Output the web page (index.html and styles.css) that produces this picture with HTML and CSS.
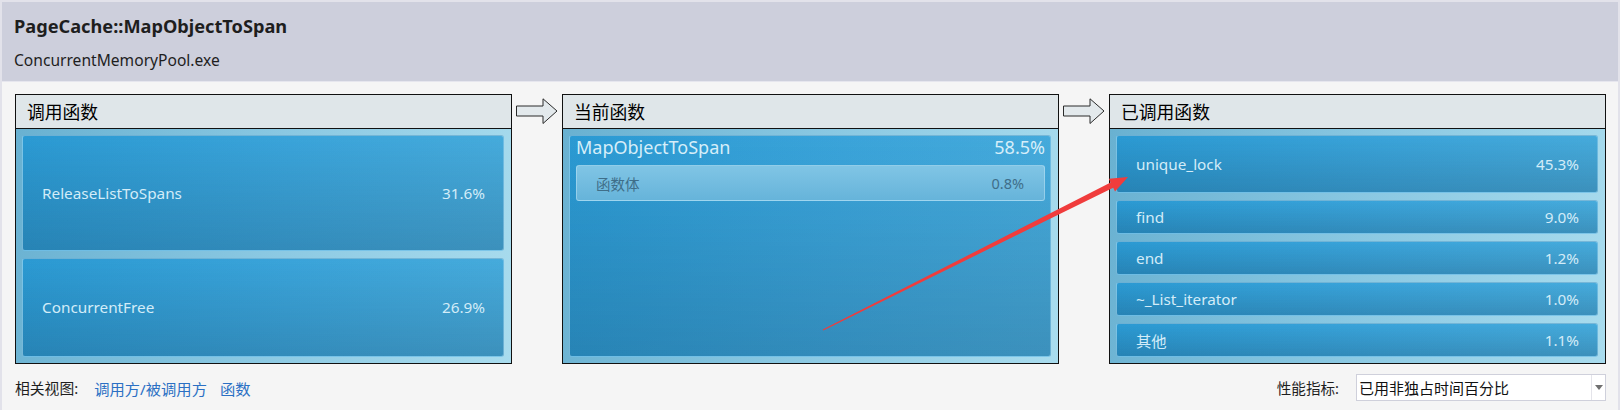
FILE: index.html
```html
<!DOCTYPE html>
<html lang="zh-CN">
<head>
<meta charset="utf-8">
<title>PageCache::MapObjectToSpan</title>
<link rel="stylesheet" href="styles.css">
</head>
<body>
<div class="page">
  <header class="band">
    <div class="title">PageCache::MapObjectToSpan</div>
    <div class="subtitle">ConcurrentMemoryPool.exe</div>
  </header>

  <main class="flow">
    <section class="panel">
      <div class="panel-head">调用函数</div>
      <div class="panel-body">
        <div class="item" style="flex:31.6 1 0"><span class="name">ReleaseListToSpans</span><span class="pct">31.6%</span></div>
        <div class="item" style="flex:26.9 1 0"><span class="name">ConcurrentFree</span><span class="pct">26.9%</span></div>
      </div>
    </section>

    <div class="link-arrow">
      <svg width="42" height="27" viewBox="0 0 42 27"><polygon points="0.5,8 27,8 27,0.8 41,13 27,25.5 27,18 0.5,18" fill="#e3e9ec" stroke="#2a2a2a" stroke-width="1"/></svg>
    </div>

    <section class="panel">
      <div class="panel-head">当前函数</div>
      <div class="panel-body">
        <div class="item current">
          <div class="current-row"><span>MapObjectToSpan</span><span>58.5%</span></div>
          <div class="body-item"><span>函数体</span><span>0.8%</span></div>
        </div>
      </div>
    </section>

    <div class="link-arrow">
      <svg width="42" height="27" viewBox="0 0 42 27"><polygon points="0.5,8 27,8 27,0.8 41,13 27,25.5 27,18 0.5,18" fill="#e3e9ec" stroke="#2a2a2a" stroke-width="1"/></svg>
    </div>

    <section class="panel">
      <div class="panel-head">已调用函数</div>
      <div class="panel-body callees">
        <div class="item big"><span class="name">unique_lock</span><span class="pct">45.3%</span></div>
        <div class="item small"><span class="name">find</span><span class="pct">9.0%</span></div>
        <div class="item small"><span class="name">end</span><span class="pct">1.2%</span></div>
        <div class="item small"><span class="name">~_List_iterator</span><span class="pct">1.0%</span></div>
        <div class="item small"><span class="name">其他</span><span class="pct">1.1%</span></div>
      </div>
    </section>
  </main>

  <footer class="bottom">
    <div class="views">
      <span class="label">相关视图:</span>
      <a class="vlink">调用方/被调用方</a>
      <a class="vlink">函数</a>
    </div>
    <div class="metric">
      <span class="label">性能指标:</span>
      <div class="combo">
        <span class="combo-text">已用非独占时间百分比</span>
        <span class="combo-btn"><svg width="8" height="5" viewBox="0 0 8 5"><polygon points="0,0 8,0 4,5" fill="#707070"/></svg></span>
      </div>
    </div>
  </footer>

  <svg class="annotation" width="1620" height="410" viewBox="0 0 1620 410">
    <polygon points="822.8,329.6 1110.6,182.4 1108.8,178.8 1128,177 1115,191.4 1113.2,187.8 823.2,330.4" fill="#f03c3c"/>
  </svg>
</div>
</body>
</html>
```

FILE: styles.css
```css
* { box-sizing: border-box; }

html, body {
  margin: 0;
  padding: 0;
}

body {
  background: #f5f5f5;
  font-family: "Noto Sans", "Noto Sans CJK SC", sans-serif;
  color: #1e1e1e;
}

.page {
  position: relative;
  width: 1620px;
  height: 410px;
  border: 2px solid #e2e2ea;
  border-bottom: none;
  overflow: hidden;
}

.band {
  background: #cdcfdc;
  height: 80px;
  padding: 12px 12px 0 12px;
  border-bottom: 1px solid #e6e6ee;
}

.title {
  font-weight: 700;
  font-size: 18.2px;
  line-height: 25px;
}

.subtitle {
  margin-top: 11px;
  font-size: 15.6px;
  line-height: 21px;
}

.flow {
  display: flex;
  margin-top: 12px;
  padding: 0 12px 0 13px;
}

.panel {
  width: 497px;
  height: 270px;
  border: 1px solid #111;
  display: flex;
  flex-direction: column;
}

.panel-head {
  height: 34px;
  background: #dfe6e9;
  border-bottom: 1px solid #111;
  padding-left: 11px;
  font-family: "Noto Sans CJK SC", sans-serif;
  font-size: 17.8px;
  line-height: 33px;
  color: #000;
}

.panel-body {
  flex: 1;
  display: flex;
  flex-direction: column;
  gap: 7px;
  padding: 6px 7px 6px 6px;
  background: linear-gradient(100deg, #69b1d1 0%, #8ac8e2 50%, #a9dcee 100%);
}

.callees { gap: 7px; }

.item {
  display: flex;
  align-items: center;
  justify-content: space-between;
  padding: 0 18px 0 19px;
  border: 1px solid rgba(190, 230, 248, 0.45);
  border-radius: 3px;
  background:
    linear-gradient(180deg, rgba(20, 40, 60, 0) 0%, rgba(20, 40, 60, 0.2) 100%),
    linear-gradient(95deg, #2b9ad3 0%, #3aa4da 55%, #46abdc 100%);
  color: #d3ecf8;
  font-size: 15.3px;
  min-height: 0;
}

.item.big { flex: 1; }
.item.small { height: 34px; flex: none; }

.item.current {
  flex: 1;
  flex-direction: column;
  align-items: stretch;
  justify-content: flex-start;
  padding: 0 5px 0 6px;
}

.current-row {
  display: flex;
  justify-content: space-between;
  font-size: 18px;
  line-height: 22px;
  color: #d6eef9;
}

.body-item {
  margin-top: 7px;
  height: 36px;
  display: flex;
  align-items: center;
  justify-content: space-between;
  padding: 0 20px 0 19px;
  border: 1px solid rgba(200, 235, 250, 0.45);
  border-radius: 3px;
  background: linear-gradient(180deg, #80c5e5 0%, #66b4da 100%);
  color: #3f6e89;
  font-size: 14.5px;
}

.link-arrow {
  width: 50px;
  display: flex;
  justify-content: center;
  align-items: flex-start;
  padding-top: 4px;
}

.link-arrow svg { display: block; }

.bottom {
  margin-top: 10px;
  height: 27px;
  display: flex;
  align-items: center;
  justify-content: space-between;
  padding: 0 12px 0 13px;
  font-size: 15.3px;
}

.views {
  display: flex;
  align-items: center;
  gap: 16px;
}

.views .label { font-size: 14.8px; }

.vlink {
  color: #2b70c4;
  cursor: pointer;
}

.views .vlink + .vlink { margin-left: -3px; }

.metric {
  display: flex;
  align-items: center;
  gap: 17px;
}

.metric .label { font-size: 14.6px; }

.combo {
  width: 250px;
  height: 27px;
  background: #fff;
  border: 1px solid #cfd0db;
  display: flex;
  align-items: center;
  justify-content: space-between;
}

.combo-text {
  padding-left: 2px;
  font-size: 15px;
  color: #111;
}

.combo-btn {
  width: 14px;
  height: 100%;
  border-left: 1px solid #e4e4ea;
  display: flex;
  align-items: center;
  justify-content: center;
}

.annotation {
  position: absolute;
  left: -2px;
  top: -2px;
  pointer-events: none;
}
```
